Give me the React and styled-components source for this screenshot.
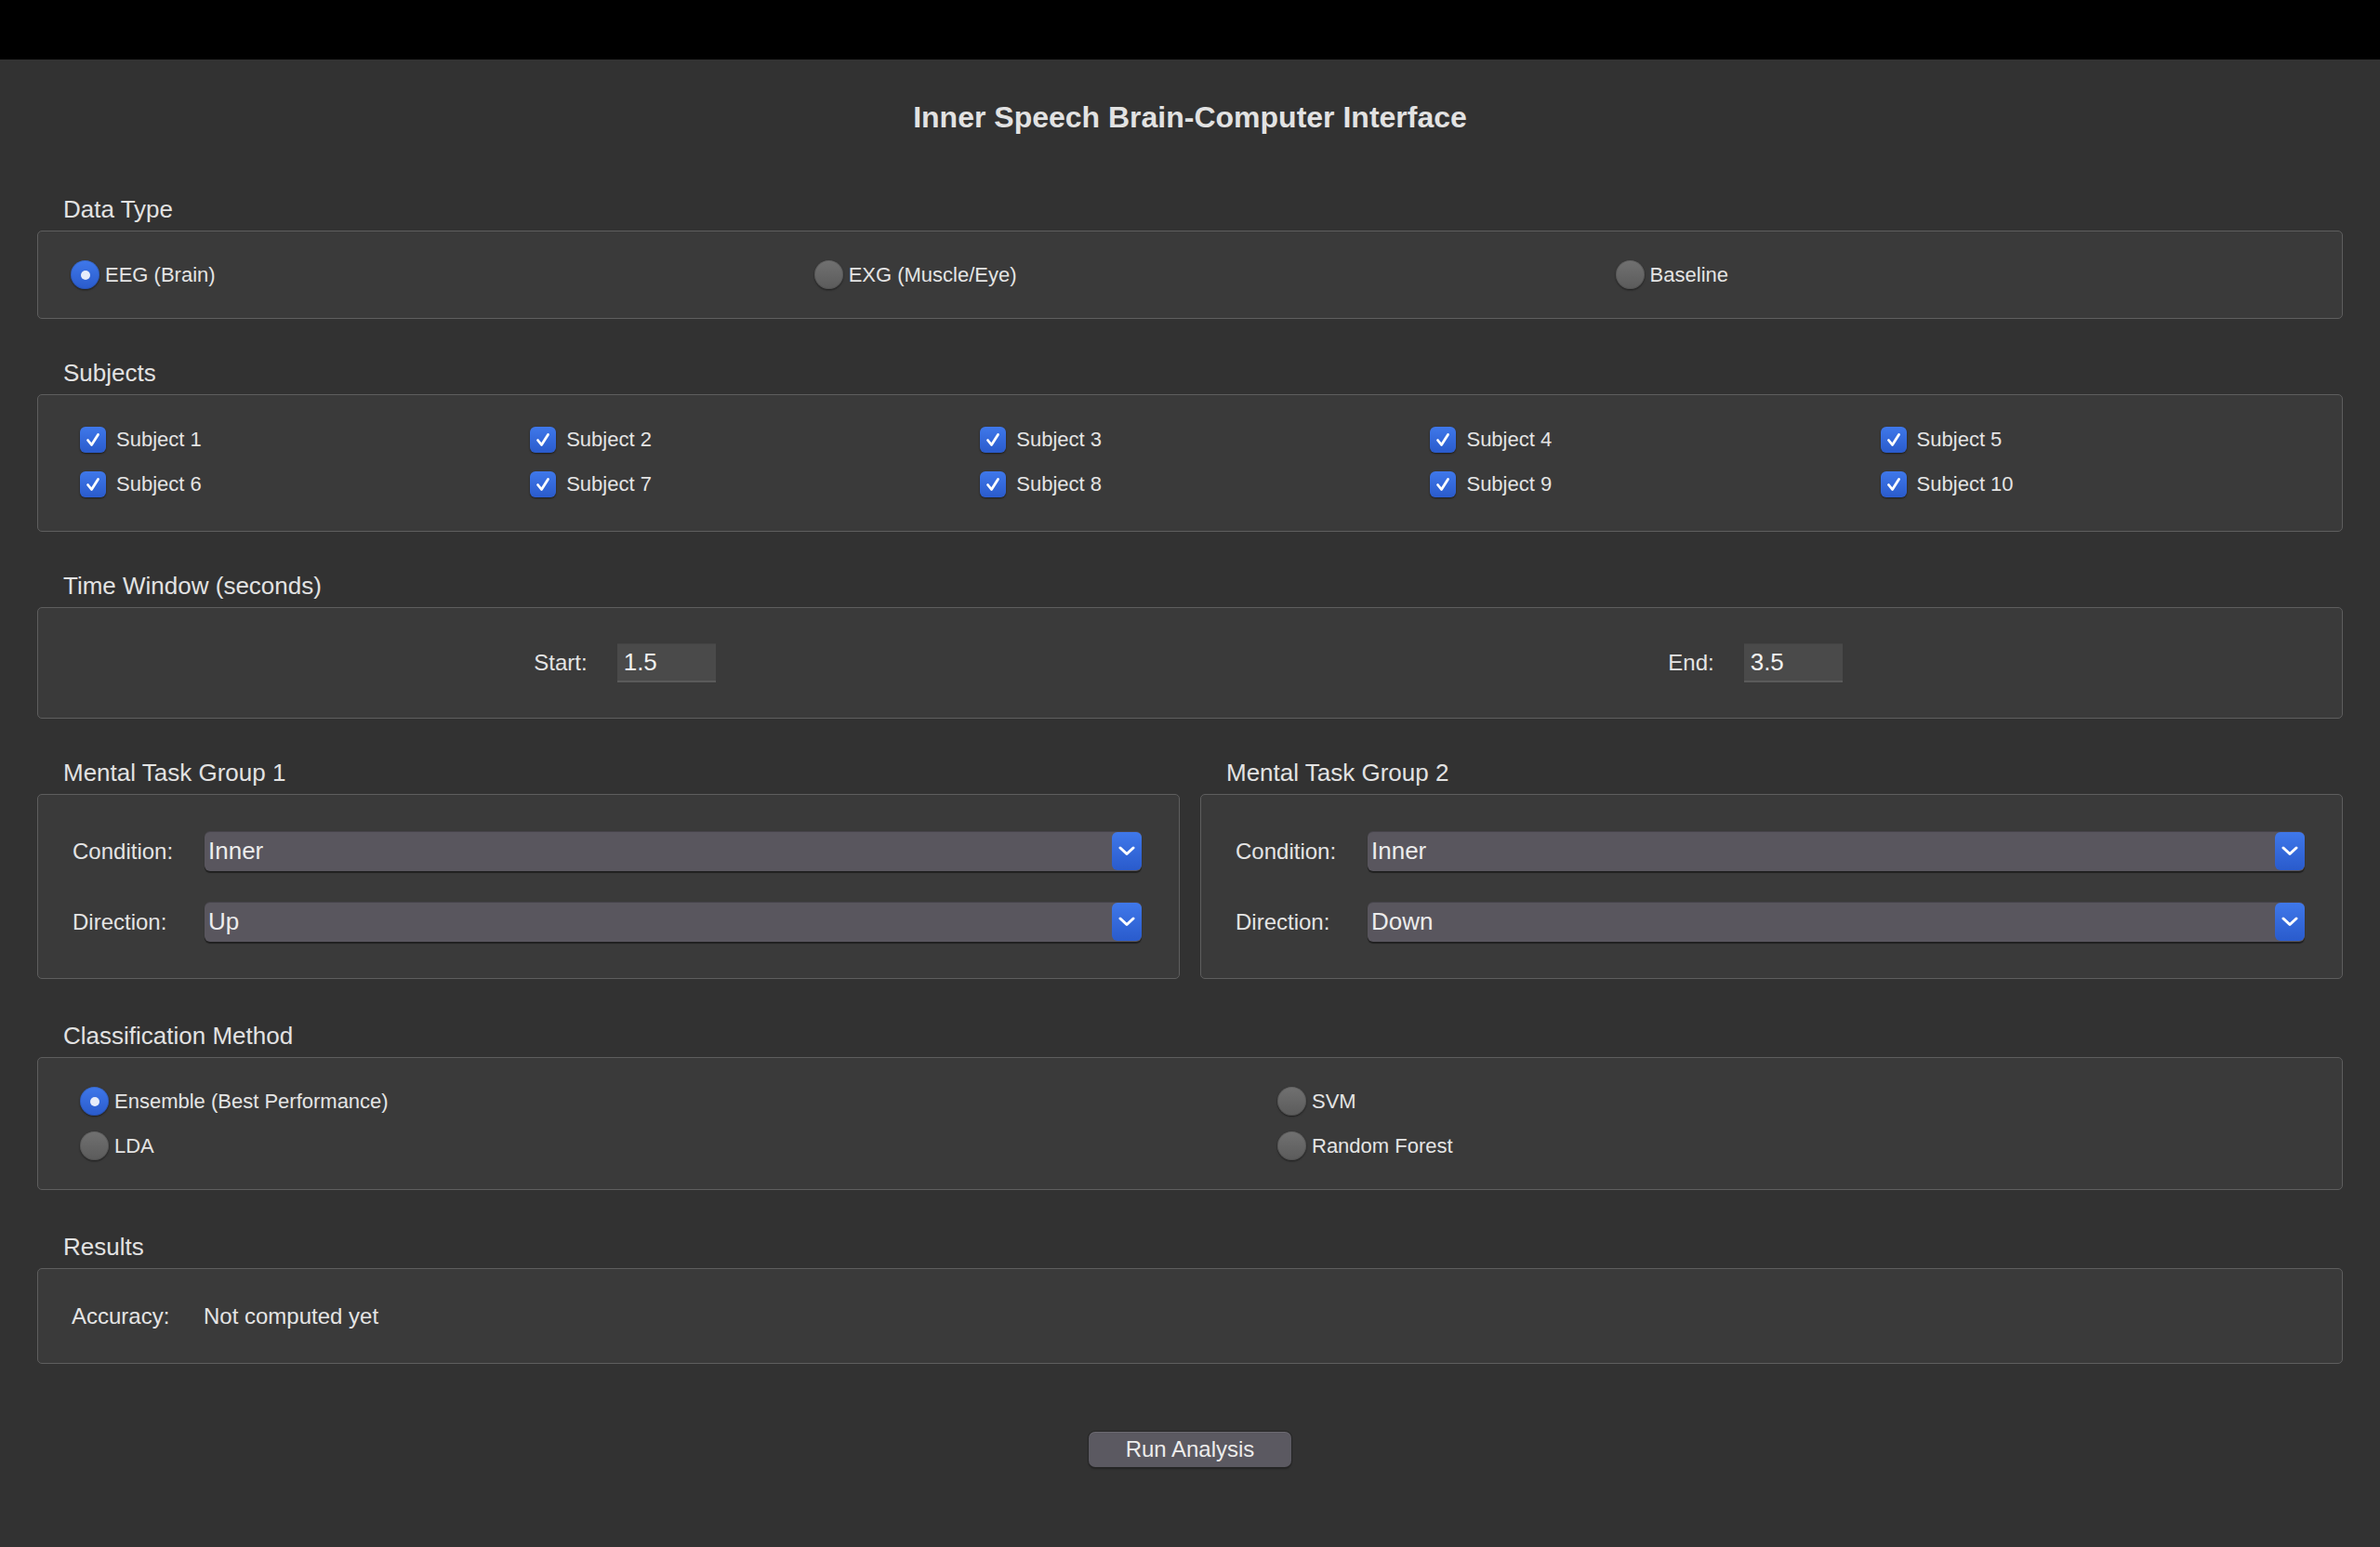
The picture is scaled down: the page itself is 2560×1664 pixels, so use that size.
import styled, { createGlobalStyle } from 'styled-components';

const GlobalStyle = createGlobalStyle`
  html, body {
    margin: 0;
    background: #323232;
  }
  body {
    font-family: 'Liberation Sans', Arial, Helvetica, sans-serif;
    color: #e0e0e0;
  }
  * { box-sizing: border-box; }
`;

const Window = styled.div`
  min-height: 1664px;
  display: flex;
  flex-direction: column;
  background: #323232;
`;

const TitleBar = styled.div`
  height: 64px;
  background: #000;
  flex-shrink: 0;
`;

const Content = styled.main`
  padding: 42px 40px 0;
  display: flex;
  flex-direction: column;
  gap: 43px;
`;

const Title = styled.h1`
  margin: 0 0 21px;
  font-size: 32px;
  line-height: 40px;
  font-weight: 700;
  text-align: center;
  color: #e2e2e2;
`;

const Section = styled.section`
  display: flex;
  flex-direction: column;
  margin-top: ${p => p.$push || 0}px;
`;

const Legend = styled.div`
  font-size: 26px;
  line-height: 30px;
  padding-left: 28px;
  margin-bottom: 8px;
  color: #e2e2e2;
`;

const Box = styled.div`
  height: ${p => p.$h}px;
  border: 1px solid #5e5e5e;
  border-radius: 5px;
  background: #3a3a3a;
`;

const RadioRow = styled.div`
  height: 100%;
  display: flex;
  align-items: center;
  padding: 0 16px 0 35px;
`;

const Option = styled.label`
  display: flex;
  align-items: center;
  gap: ${p => p.$gap || 6}px;
  font-size: 22px;
  color: #e4e4e4;
  flex: ${p => (p.$grow ? '1 1 auto' : '0 0 auto')};
  white-space: nowrap;
`;

const RadioDot = styled.span`
  width: 31px;
  height: 31px;
  border-radius: 50%;
  flex-shrink: 0;
  display: flex;
  align-items: center;
  justify-content: center;
  background: ${p => (p.$on ? 'linear-gradient(#3f78ea, #2a5bcc)' : 'linear-gradient(#717171, #5b5b5b)')};
  box-shadow: 0 1px 2px rgba(0, 0, 0, 0.55), inset 0 0 0 1px rgba(0, 0, 0, 0.12);
  &::after {
    content: '';
    display: ${p => (p.$on ? 'block' : 'none')};
    width: 10px;
    height: 10px;
    border-radius: 50%;
    background: #e6ecfa;
  }
`;

const CheckBox = styled.span`
  width: 28px;
  height: 28px;
  border-radius: 6px;
  flex-shrink: 0;
  display: flex;
  align-items: center;
  justify-content: center;
  background: linear-gradient(#3f78ea, #2a5bcc);
  box-shadow: 0 1px 2px rgba(0, 0, 0, 0.55);
`;

const SubjectGrid = styled.div`
  height: 100%;
  display: grid;
  grid-template-columns: repeat(5, auto);
  align-content: center;
  row-gap: 20px;
  padding: 0 0 2px 45px;
`;

const TimeGrid = styled.div`
  height: 100%;
  display: grid;
  grid-template-columns: 1fr 1fr;
  align-items: center;
  padding: 0 23px;
`;

const TimeField = styled.div`
  display: flex;
  align-items: center;
  justify-content: center;
  gap: 32px;
`;

const FieldLabel = styled.span`
  font-size: 24px;
  color: #e4e4e4;
  white-space: nowrap;
`;

const Entry = styled.input`
  width: 106px;
  height: 42px;
  border: none;
  border-top: 1px solid #444;
  border-bottom: 2px solid #5a5a5a;
  background: #4a4a4a;
  color: #f2f2f2;
  font-family: inherit;
  font-size: 26px;
  padding: 0 7px;
  outline: none;
`;

const GroupRow = styled.div`
  display: grid;
  grid-template-columns: 1fr 1fr;
  gap: 22px;
`;

const FormGrid = styled.div`
  height: 100%;
  display: grid;
  grid-template-columns: 142px 1fr;
  align-content: center;
  align-items: center;
  row-gap: 33px;
  padding: 0 40px 0 37px;
`;

const Combo = styled.div`
  height: 43px;
  display: flex;
  align-items: stretch;
  border-radius: 6px;
  background: #59565e;
  box-shadow: 0 2px 1px rgba(0, 0, 0, 0.45), inset 0 1px 0 rgba(0, 0, 0, 0.2);
`;

const ComboText = styled.span`
  flex: 1;
  display: flex;
  align-items: center;
  padding-left: 4px;
  font-size: 26px;
  color: #ececec;
`;

const ComboArrow = styled.span`
  width: 32px;
  margin: 1px 0 1px;
  border-radius: 6px;
  display: flex;
  align-items: center;
  justify-content: center;
  background: linear-gradient(#3f78ea, #2a5bcc);
`;

const MethodGrid = styled.div`
  height: 100%;
  display: grid;
  grid-template-columns: 1288px 1fr;
  align-content: center;
  row-gap: 17px;
  padding-left: 45px;
`;

const ResultGrid = styled(FormGrid)`
  padding: 0 40px 0 36px;
`;

const ResultValue = styled.span`
  font-size: 24px;
  color: #e4e4e4;
`;

const Actions = styled.div`
  display: flex;
  justify-content: center;
  margin-top: 30px;
`;

const RunButton = styled.button`
  width: 218px;
  height: 38px;
  border: none;
  border-radius: 7px;
  background: #5b5961;
  color: #ececec;
  font-family: inherit;
  font-size: 24px;
  box-shadow: 0 0 0 1px #262626, 0 2px 2px rgba(0, 0, 0, 0.35), inset 0 1px 0 rgba(255, 255, 255, 0.1);
  cursor: pointer;
`;

const Check = () => (
  <svg width="28" height="28" viewBox="0 0 28 28">
    <polyline points="8.5,14.5 12.5,19.5 19.5,8.5" fill="none" stroke="#fff" strokeWidth="2.8" strokeLinecap="round" strokeLinejoin="round" />
  </svg>
);

const Chevron = () => (
  <svg width="18" height="11" viewBox="0 0 18 11">
    <polyline points="2,2 9,8.5 16,2" fill="none" stroke="#fff" strokeWidth="3" strokeLinecap="round" strokeLinejoin="round" />
  </svg>
);

const Radio = ({ on, grow, children }) => (
  <Option $grow={grow}>
    <RadioDot $on={on} />
    {children}
  </Option>
);

const Select = ({ value }) => (
  <Combo>
    <ComboText>{value}</ComboText>
    <ComboArrow><Chevron /></ComboArrow>
  </Combo>
);

const TaskGroup = ({ title, condition, direction }) => (
  <Section>
    <Legend>{title}</Legend>
    <Box $h={199}>
      <FormGrid>
        <FieldLabel>Condition:</FieldLabel>
        <Select value={condition} />
        <FieldLabel>Direction:</FieldLabel>
        <Select value={direction} />
      </FormGrid>
    </Box>
  </Section>
);

const subjects = [1, 2, 3, 4, 5, 6, 7, 8, 9, 10];

export default function App() {
  return (
    <Window>
      <GlobalStyle />
      <TitleBar />
      <Content>
        <Title>Inner Speech Brain-Computer Interface</Title>

        <Section>
          <Legend>Data Type</Legend>
          <Box $h={95}>
            <RadioRow>
              <Radio on grow>EEG (Brain)</Radio>
              <Radio grow>EXG (Muscle/Eye)</Radio>
              <Radio grow>Baseline</Radio>
            </RadioRow>
          </Box>
        </Section>

        <Section>
          <Legend>Subjects</Legend>
          <Box $h={148}>
            <SubjectGrid>
              {subjects.map(n => (
                <Option key={n} $gap={11}>
                  <CheckBox><Check /></CheckBox>
                  Subject {n}
                </Option>
              ))}
            </SubjectGrid>
          </Box>
        </Section>

        <Section>
          <Legend>Time Window (seconds)</Legend>
          <Box $h={120}>
            <TimeGrid>
              <TimeField>
                <FieldLabel>Start:</FieldLabel>
                <Entry defaultValue="1.5" />
              </TimeField>
              <TimeField>
                <FieldLabel>End:</FieldLabel>
                <Entry defaultValue="3.5" />
              </TimeField>
            </TimeGrid>
          </Box>
        </Section>

        <GroupRow>
          <TaskGroup title="Mental Task Group 1" condition="Inner" direction="Up" />
          <TaskGroup title="Mental Task Group 2" condition="Inner" direction="Down" />
        </GroupRow>

        <Section $push={3}>
          <Legend>Classification Method</Legend>
          <Box $h={143}>
            <MethodGrid>
              <Radio on>Ensemble (Best Performance)</Radio>
              <Radio>SVM</Radio>
              <Radio>LDA</Radio>
              <Radio>Random Forest</Radio>
            </MethodGrid>
          </Box>
        </Section>

        <Section $push={3}>
          <Legend>Results</Legend>
          <Box $h={103}>
            <ResultGrid>
              <FieldLabel>Accuracy:</FieldLabel>
              <ResultValue>Not computed yet</ResultValue>
            </ResultGrid>
          </Box>
        </Section>

        <Actions>
          <RunButton>Run Analysis</RunButton>
        </Actions>
      </Content>
    </Window>
  );
}
